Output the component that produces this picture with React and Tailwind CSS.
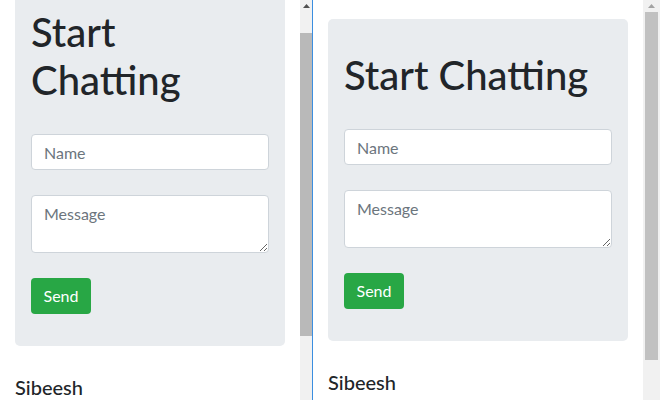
import React from 'react';

const font = { fontFamily: '"Lato", "Noto Sans", sans-serif' };

function ChatCard({ narrow }) {
  return (
    <div className="bg-[#e9ecef] rounded-[5px] px-4 pt-8 pb-8">
      <h1 className={`text-[40px] leading-[48px] font-medium text-[#212529] mb-[30px] ${narrow ? 'pr-16' : ''}`}>
        Start Chatting
      </h1>
      <div className="flex flex-col gap-[25px]">
        <input
          type="text"
          placeholder="Name"
          className="h-[36px] w-full bg-white border border-[#ced4da] rounded-[4px] px-3 text-base text-[#495057] placeholder:text-[#6c757d] outline-none"
        />
        <textarea
          placeholder="Message"
          className="h-[58px] w-full bg-white border border-[#ced4da] rounded-[4px] px-3 py-1.5 text-base leading-6 text-[#495057] placeholder:text-[#6c757d] outline-none block"
        />
        <div>
          <button className="h-[36px] w-[60px] bg-[#28a745] text-white text-base rounded-[4px]">
            Send
          </button>
        </div>
      </div>
    </div>
  );
}

function ScrollBar({ thumbTop, thumbHeight, width, arrowColor }) {
  return (
    <div className={`${width} h-full bg-[#f1f1f1] flex flex-col items-center shrink-0`}>
      <div className="h-[12px] flex items-center justify-center">
        <svg width="7" height="4" viewBox="0 0 7 4">
          <polygon points="0,4 3.5,0 7,4" fill={arrowColor} />
        </svg>
      </div>
      <div style={{ marginTop: thumbTop - 12, height: thumbHeight }} className="w-[12px] bg-[#b9b9b9]" />
    </div>
  );
}

export default function App() {
  return (
    <div style={font} className="w-[660px] h-[400px] overflow-hidden flex bg-white text-[#212529]">
      <div className="w-[300px] h-full overflow-hidden px-[15px] shrink-0">
        <div className="-mt-[24px]">
          <ChatCard narrow />
          <h5 className="text-[20px] leading-6 font-medium mt-[29px]">Sibeesh</h5>
        </div>
      </div>
      <ScrollBar thumbTop={33} thumbHeight={303} width="w-[12px]" arrowColor="#505050" />
      <div className="w-px h-full bg-[#3b8ee0] shrink-0" />
      <div className="w-[330px] h-full overflow-hidden px-[15px] pt-[19px] shrink-0">
        <ChatCard />
        <h5 className="text-[20px] leading-6 font-medium mt-[29px]">Sibeesh</h5>
      </div>
      <div className="w-[17px] h-full bg-[#f1f1f1] flex flex-col items-center shrink-0">
        <div className="h-[12px] flex items-center justify-center">
          <svg width="7" height="4" viewBox="0 0 7 4">
            <polygon points="0,4 3.5,0 7,4" fill="#a3a3a3" />
          </svg>
        </div>
        <div className="w-[13px] h-[348px] bg-[#c1c1c1]" />
      </div>
    </div>
  );
}
